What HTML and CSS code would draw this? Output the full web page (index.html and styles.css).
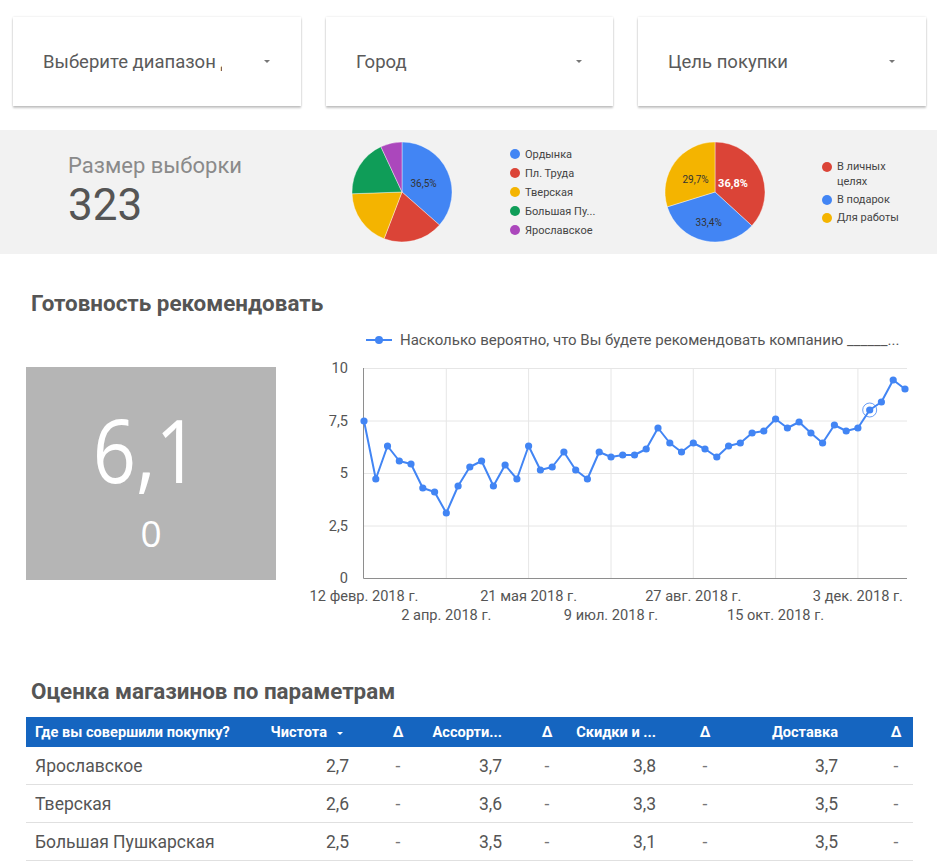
FILE: index.html
```html
<!DOCTYPE html>
<html lang="ru">
<head>
<meta charset="utf-8">
<title>Dashboard</title>
<link rel="stylesheet" href="styles.css">
</head>
<body>
<div class="filters">
  <div class="filter"><span class="filter-label clip">Выберите диапазон дат</span><span class="caret"></span></div>
  <div class="filter filter-mid"><span class="filter-label">Город</span><span class="caret"></span></div>
  <div class="filter"><span class="filter-label">Цель покупки</span><span class="caret"></span></div>
</div>

<div class="band">
  <div class="stat">
    <div class="stat-label">Размер выборки</div>
    <div class="stat-value">323</div>
  </div>
  <svg class="pie" width="102" height="102" viewBox="0 0 102 102">
    <g stroke="#fff" stroke-width="0.4">
      <path d="M51 51L51 1A50 50 0 0 1 88.5 84.07Z" fill="#4285f4"/>
      <path d="M51 51L88.5 84.07A50 50 0 0 1 33.08 97.68Z" fill="#db4437"/>
      <path d="M51 51L33.08 97.68A50 50 0 0 1 1.03 52.75Z" fill="#f4b400"/>
      <path d="M51 51L1.03 52.75A50 50 0 0 1 29.87 5.68Z" fill="#0f9d58"/>
      <path d="M51 51L29.87 5.68A50 50 0 0 1 51 1Z" fill="#ab47bc"/>
    </g>
    <text x="72.5" y="45.8" class="pie-txt" text-anchor="middle">36,5%</text>
  </svg>
  <ul class="legend legend-stores">
    <li><span class="dot dot-blue"></span><span>Ордынка</span></li>
    <li><span class="dot dot-red"></span><span>Пл. Труда</span></li>
    <li><span class="dot dot-yellow"></span><span>Тверская</span></li>
    <li><span class="dot dot-green"></span><span>Большая Пу...</span></li>
    <li><span class="dot dot-purple"></span><span>Ярославское</span></li>
  </ul>
  <svg class="pie" width="102" height="102" viewBox="0 0 102 102">
    <g stroke="#fff" stroke-width="0.4">
      <path d="M51 51L51 1A50 50 0 0 1 87.86 84.78Z" fill="#db4437"/>
      <path d="M51 51L87.86 84.78A50 50 0 0 1 3.26 65.87Z" fill="#4285f4"/>
      <path d="M51 51L3.26 65.87A50 50 0 0 1 51 1Z" fill="#f4b400"/>
    </g>
    <text x="69" y="46" class="pie-txt pie-strong" text-anchor="middle">36,8%</text>
    <text x="44.7" y="84.5" class="pie-txt" text-anchor="middle">33,4%</text>
    <text x="31.5" y="41.8" class="pie-txt" text-anchor="middle">29,7%</text>
  </svg>
  <ul class="legend legend-goals">
    <li><span class="dot dot-red"></span><span>В личных целях</span></li>
    <li><span class="dot dot-blue"></span><span>В подарок</span></li>
    <li><span class="dot dot-yellow"></span><span>Для работы</span></li>
  </ul>
</div>

<h2 class="section-title">Готовность рекомендовать</h2>
<div class="nps-row">
  <div class="score">
    <div class="score-main"><span class="score-num">6,1</span></div>
    <div class="score-sub">0</div>
  </div>
  <svg class="trend" width="637" height="305" viewBox="300 325 637 305">
    <defs>
      <marker id="pt" viewBox="0 0 8 8" refX="4" refY="4" markerWidth="8" markerHeight="8" markerUnits="userSpaceOnUse">
        <circle cx="4" cy="4" r="3.6" fill="#4285f4"/>
      </marker>
    </defs>
    <g class="grid">
      <path d="M364 368.5H907M364 421H907M364 473.5H907M364 526H907"/>
      <path d="M446.3 368V578M528.6 368V578M611 368V578M693.3 368V578M775.6 368V578M857.9 368V578"/>
    </g>
    <path class="axis" d="M363.5 368V578.5H907"/>
    <g class="ylab" text-anchor="end">
      <text x="348" y="373">10</text>
      <text x="348" y="426">7,5</text>
      <text x="348" y="478">5</text>
      <text x="348" y="531">2,5</text>
      <text x="348" y="583">0</text>
    </g>
    <g class="xlab" text-anchor="middle">
      <text x="364" y="601">12 февр. 2018 г.</text>
      <text x="528.6" y="601">21 мая 2018 г.</text>
      <text x="693.3" y="601">27 авг. 2018 г.</text>
      <text x="857.9" y="601">3 дек. 2018 г.</text>
      <text x="446.3" y="620">2 апр. 2018 г.</text>
      <text x="611" y="620">9 июл. 2018 г.</text>
      <text x="775.6" y="620">15 окт. 2018 г.</text>
    </g>
    <polyline class="series" marker-start="url(#pt)" marker-mid="url(#pt)" marker-end="url(#pt)"
      points="364,421 375.8,479 387.5,446 399.3,461 411,464 422.8,488 434.6,492 446.3,513 458.1,486 469.8,467 481.6,461 493.4,486 505.1,465 516.9,479 528.6,446 540.4,470 552.2,467 563.9,452 575.7,470 587.4,479 599.2,452 611,457 622.7,455 634.5,455 646.2,449 658,428 669.8,443 681.5,452 693.3,443 705,449 716.8,457 728.6,446 740.3,443 752.1,433 763.8,431 775.6,419 787.4,428 799.1,422 810.9,433 822.6,443 834.4,425 846.2,431 857.9,428 869.7,410 881.4,402 893.2,380 905,389"/>
    <circle class="focus" cx="869.7" cy="410" r="7"/>
    <path class="legend-line" d="M366 340H392"/>
    <circle cx="379" cy="340" r="4" fill="#4285f4"/>
    <text class="legend-text" x="400" y="345">Насколько вероятно, что Вы будете рекомендовать компанию ______...</text>
  </svg>
</div>

<h2 class="section-title table-title">Оценка магазинов по параметрам</h2>
<div class="table">
  <div class="tr thead">
    <div class="c-name">Где вы совершили покупку?</div>
    <div class="c-num c2 sorted">Чистота<span class="sort-caret"></span></div>
    <div class="c-delta">Δ</div>
    <div class="c-num c4">Ассорти...</div>
    <div class="c-delta">Δ</div>
    <div class="c-num c6">Скидки и ...</div>
    <div class="c-delta">Δ</div>
    <div class="c-num c8">Доставка</div>
    <div class="c-delta">Δ</div>
  </div>
  <div class="tr row">
    <div class="c-name">Ярославское</div>
    <div class="c-num c2">2,7</div><div class="c-delta">-</div>
    <div class="c-num c4">3,7</div><div class="c-delta">-</div>
    <div class="c-num c6">3,8</div><div class="c-delta">-</div>
    <div class="c-num c8">3,7</div><div class="c-delta">-</div>
  </div>
  <div class="tr row">
    <div class="c-name">Тверская</div>
    <div class="c-num c2">2,6</div><div class="c-delta">-</div>
    <div class="c-num c4">3,6</div><div class="c-delta">-</div>
    <div class="c-num c6">3,3</div><div class="c-delta">-</div>
    <div class="c-num c8">3,5</div><div class="c-delta">-</div>
  </div>
  <div class="tr row">
    <div class="c-name">Большая Пушкарская</div>
    <div class="c-num c2">2,5</div><div class="c-delta">-</div>
    <div class="c-num c4">3,5</div><div class="c-delta">-</div>
    <div class="c-num c6">3,1</div><div class="c-delta">-</div>
    <div class="c-num c8">3,5</div><div class="c-delta">-</div>
  </div>
</div>
</body>
</html>
```

FILE: styles.css
```css
body {
  margin: 0;
  background: #fff;
  font-family: Roboto, "Noto Sans", sans-serif;
  color: #555;
  overflow: hidden;
}

/* filters */
.filters {
  display: flex;
  gap: 25px;
  padding: 17px 0 0 13px;
}
.filter {
  box-sizing: border-box;
  width: 288px;
  height: 89px;
  background: #fff;
  box-shadow: 0 2px 2px rgba(0, 0, 0, 0.22), 0 0 2px rgba(0, 0, 0, 0.12);
  display: flex;
  align-items: center;
  padding: 0 31px 0 30px;
}
.filter-mid { width: 287px; }
.filter-label {
  font-size: 18.5px;
  color: #5a5a5a;
  white-space: nowrap;
  overflow: hidden;
}
.filter-label.clip { width: 179px; flex: none; }
.caret {
  margin-left: auto;
  width: 0;
  height: 0;
  border-left: 3px solid transparent;
  border-right: 3px solid transparent;
  border-top: 3px solid #777;
}

/* sample band */
.band {
  margin-top: 24px;
  height: 124px;
  background: #f2f2f2;
  display: flex;
  align-items: center;
}
.stat {
  align-self: stretch;
  flex: none;
  box-sizing: border-box;
  width: 351px;
  padding: 23px 0 0 68px;
}
.stat-label { font-size: 22px; line-height: 26px; color: #8a8a8a; }
.stat-value { margin-top: 3px; font-size: 44px; line-height: 46px; color: #555; }
.pie { display: block; flex: none; }
.pie-txt { font-family: Roboto, sans-serif; font-size: 10px; fill: #333; }
.pie-strong { font-weight: 700; fill: #fff; font-size: 11px; }

.legend {
  list-style: none;
  margin: 0;
  padding: 0;
  display: flex;
  flex-direction: column;
  gap: 4px;
  font-size: 11px;
  line-height: 15px;
  color: #444;
  flex: none;
}
.legend li { display: flex; align-items: flex-start; gap: 5px; }
.legend-stores { margin-left: 57px; width: 154px; }
.legend-goals { margin-left: 56px; width: 85px; gap: 3px; }
.dot {
  flex: none;
  width: 10px;
  height: 10px;
  border-radius: 50%;
  margin-top: 2.5px;
}
.dot-blue { background: #4285f4; }
.dot-red { background: #db4437; }
.dot-yellow { background: #f4b400; }
.dot-green { background: #0f9d58; }
.dot-purple { background: #ab47bc; }

/* sections */
.section-title {
  margin: 0;
  padding: 37px 0 0 31px;
  font-size: 22.4px;
  line-height: 24px;
  font-weight: 700;
  color: #555;
}
.table-title { padding-top: 49px; }

.nps-row {
  display: flex;
  gap: 24px;
  padding-left: 26px;
  margin-top: 10px;
}
.score {
  flex: none;
  box-sizing: border-box;
  width: 250px;
  height: 213px;
  margin-top: 42px;
  padding-top: 40px;
  background: #b5b5b5;
  color: #fff;
  font-family: "Open Sans", sans-serif;
  text-align: center;
}
.score-main { font-size: 88px; line-height: 84px; }
.score-num {
  display: inline-block;
  margin-right: 10px;
  transform: scaleX(0.86);
}
.score-sub { font-size: 37px; line-height: 40px; margin-top: 22px; }

.trend { display: block; flex: none; }
.grid path { stroke: #e6e6e6; stroke-width: 1; fill: none; }
.axis { stroke: #8e8e8e; stroke-width: 1; fill: none; }
.ylab text, .xlab text { font-family: Roboto, sans-serif; font-size: 14.6px; fill: #555; }
.series { fill: none; stroke: #4285f4; stroke-width: 2; stroke-linejoin: round; }
.focus { fill: none; stroke: #4285f4; stroke-width: 1; opacity: 0.8; }
.legend-line { stroke: #4285f4; stroke-width: 2; }
.legend-text { font-family: Roboto, sans-serif; font-size: 15px; fill: #555; }

/* table */
.table {
  margin: 14px 0 0 26px;
  width: 887px;
}
.tr {
  display: grid;
  grid-template-columns: 236px 116px 40px 109px 40px 118px 40px 154px 34px;
  align-items: center;
  white-space: nowrap;
}
.thead {
  height: 30px;
  background: #1565c0;
  color: #fff;
  font-size: 14.6px;
  font-weight: 700;
}
.row {
  box-sizing: border-box;
  height: 38px;
  border-bottom: 1px solid #e0e0e0;
  font-size: 17.5px;
  color: #555;
}
.c-name { padding-left: 9px; }
.c-num { text-align: right; }
.c-delta { text-align: center; }
.row .c-delta { color: #777; }
.c2 { padding-right: 29px; }
.c4 { padding-right: 25px; }
.c6 { padding-right: 29px; }
.c8 { padding-right: 41px; }
.thead .c2 { padding-right: 35px; }
.sort-caret {
  display: inline-block;
  vertical-align: middle;
  margin-left: 10px;
  width: 0;
  height: 0;
  border-left: 3px solid transparent;
  border-right: 3px solid transparent;
  border-top: 3px solid #fff;
}
```
